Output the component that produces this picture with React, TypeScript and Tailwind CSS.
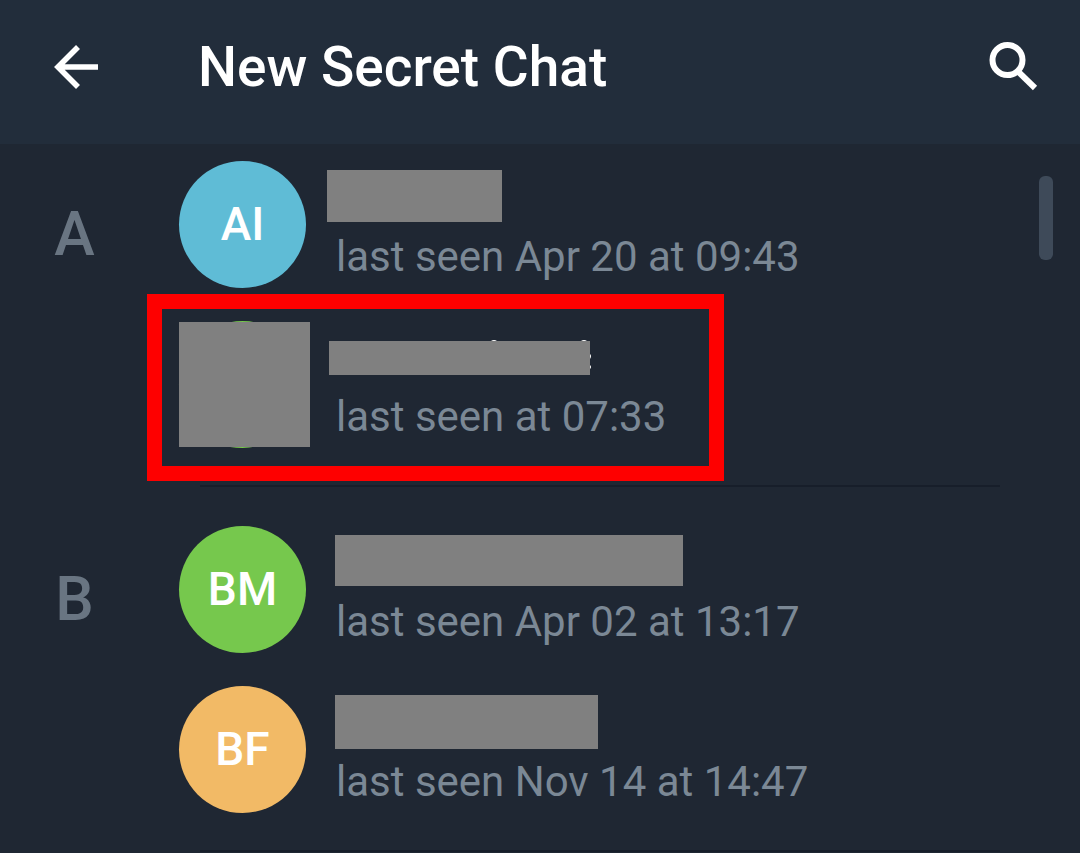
type Contact = {
  initials: string;
  color: string;
  nameBar: string;
  status: string;
  selected?: boolean;
};

type Section = { letter: string; contacts: Contact[] };

const sections: Section[] = [
  {
    letter: "A",
    contacts: [
      {
        initials: "AI",
        color: "bg-[#5fbcd6]",
        nameBar: "h-[52px] w-[175px]",
        status: "last seen Apr 20 at 09:43",
      },
      {
        initials: "",
        color: "bg-[#76c84d]",
        nameBar: "mt-[11px] ml-0.5 h-[34px] w-[261px]",
        status: "last seen at 07:33",
        selected: true,
      },
    ],
  },
  {
    letter: "B",
    contacts: [
      {
        initials: "BM",
        color: "bg-[#76c84d]",
        nameBar: "ml-2 h-[51px] w-[348px]",
        status: "last seen Apr 02 at 13:17",
      },
      {
        initials: "BF",
        color: "bg-[#f2ba66]",
        nameBar: "ml-2 h-[54px] w-[263px]",
        status: "last seen Nov 14 at 14:47",
      },
    ],
  },
];

function BackIcon() {
  return (
    <svg width="48" height="48" viewBox="0 0 48 48" fill="none" stroke="currentColor" strokeWidth="5.6" aria-hidden="true">
      <path d="M46 24H6M26 4L6 24l20 20" />
    </svg>
  );
}

function SearchIcon() {
  return (
    <svg width="52" height="52" viewBox="0 0 52 52" fill="none" stroke="currentColor" aria-hidden="true">
      <circle cx="19.5" cy="19" r="15" strokeWidth="6" />
      <path d="M29.5 30L47 47" strokeWidth="6" />
    </svg>
  );
}

function NameTraces() {
  return (
    <svg className="absolute -top-px left-0" width="264" height="36" viewBox="0 0 264 36" fill="#fff" aria-hidden="true">
      <path d="M162 1q3-2 6 0zM252 1q3-2 6 0z" />
      <path d="M261 14q2 2 0 5zM261 25q2 2 0 4z" />
    </svg>
  );
}

function ContactRow({ contact }: { contact: Contact }) {
  return (
    <li className="relative">
      <button type="button" className="flex h-40 w-full items-start text-left">
        <span
          className={`relative mt-4 flex size-[127px] shrink-0 items-center justify-center rounded-full text-[46px] font-medium text-white ${contact.color}`}
        >
          {contact.initials}
          {contact.selected && <span className="absolute top-px left-0 h-[125px] w-[131px] bg-[#808080]" />}
        </span>
        <span className="ml-[21px] flex flex-col pt-[25px]">
          <span className="flex h-[54px] items-start">
            <span className={`relative block bg-[#808080] ${contact.nameBar}`}>
              {contact.selected && <NameTraces />}
            </span>
          </span>
          <span className="pt-2 pl-[9px] text-[42px] leading-[50px] whitespace-nowrap text-[#7b8895]">
            {contact.status}
          </span>
        </span>
      </button>
      {contact.selected && (
        <span className="pointer-events-none absolute -top-[11px] -left-8 h-[187px] w-[577px] border-[15px] border-[#fe0000]" />
      )}
    </li>
  );
}

export default function App() {
  return (
    <div className="min-h-screen overflow-hidden bg-[#1f2733] font-['Roboto','Liberation_Sans',sans-serif]">
      <header className="flex h-36 items-center bg-[#222d3b] pr-10 pb-2.5 pl-[52px] text-white">
        <button type="button" aria-label="Back" className="shrink-0">
          <BackIcon />
        </button>
        <h1 className="ml-[98px] flex-1 text-[55px] leading-16 font-medium whitespace-nowrap">New Secret Chat</h1>
        <button type="button" aria-label="Search" className="shrink-0">
          <SearchIcon />
        </button>
      </header>
      <main className="relative pt-px">
        {sections.map((section) => (
          <section key={section.letter} className="mb-[23px]">
            <div className="flex pb-5">
              <h2 className="w-[149px] shrink-0 pt-[53px] text-center text-[61px] leading-[72px] font-medium text-[#697582]">
                {section.letter}
              </h2>
              <ul className="ml-[30px] flex-1">
                {section.contacts.map((contact) => (
                  <ContactRow key={contact.status} contact={contact} />
                ))}
              </ul>
            </div>
            <hr className="mr-20 ml-[200px] h-0.5 border-0 bg-[#171e2a]" />
          </section>
        ))}
        <div className="absolute top-8 right-[27px] h-[84px] w-3.5 rounded-md bg-[#3e4a59]" />
      </main>
    </div>
  );
}
